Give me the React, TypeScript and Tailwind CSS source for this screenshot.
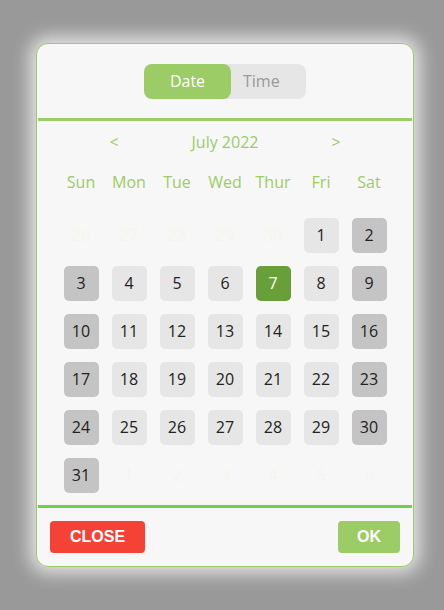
import React from "react";

const font = { fontFamily: '"Open Sans", "Noto Sans", sans-serif' };

const weekdays = ["Sun", "Mon", "Tue", "Wed", "Thur", "Fri", "Sat"];

type Cell = { n: number; muted?: boolean };

function buildDays(): Cell[] {
  const cells: Cell[] = [];
  for (let d = 26; d <= 30; d++) cells.push({ n: d, muted: true });
  for (let d = 1; d <= 31; d++) cells.push({ n: d });
  for (let d = 1; d <= 6; d++) cells.push({ n: d, muted: true });
  return cells;
}

export default function App() {
  const days = buildDays();
  const selected = 7;

  return (
    <div className="w-[444px] h-[610px] bg-[#999999] flex items-center pl-[36px]" style={font}>
      <div className="w-[378px] h-[524px] bg-[#f7f7f7] border border-[#9ccc65] rounded-[12px] shadow-[0_0_18px_6px_rgba(255,255,255,0.75)] flex flex-col overflow-hidden">
        {/* tabs */}
        <div className="h-[74px] flex items-center justify-center">
          <div className="w-[162px] h-[35px] bg-[#e6e6e6] rounded-[8px] flex">
            <div className="w-[87px] h-full bg-[#9ccc65] rounded-[8px] flex items-center justify-center text-white text-[16px]">
              Date
            </div>
            <div className="flex-1 flex items-center pl-[12px] text-[#999] text-[16px]">
              Time
            </div>
          </div>
        </div>
        <div className="h-[3px] bg-[#9ccc65] mx-px" />

        {/* calendar */}
        <div className="flex flex-col items-center">
          <div className="h-[41px] w-[336px] flex items-center text-[#9ccc65] text-[16px]">
            <div className="w-[48px] ml-[33px] text-center">&lt;</div>
            <div className="flex-1 text-center">July 2022</div>
            <div className="w-[48px] mr-[33px] text-center">&gt;</div>
          </div>
          <div className="h-[40px] w-[336px] grid grid-cols-7 items-center text-[#9ccc65] text-[16px]">
            {weekdays.map((w) => (
              <div key={w} className="text-center">{w}</div>
            ))}
          </div>
          <div className="mt-[9px] w-[336px] grid grid-cols-7 auto-rows-[48px]">
            {days.map((c, i) => {
              const col = i % 7;
              const weekend = col === 0 || col === 6;
              if (c.muted) {
                return (
                  <div key={i} className="flex items-center justify-center text-[16px] text-[#f1f7ec]">
                    {c.n}
                  </div>
                );
              }
              const isSel = c.n === selected;
              const bg = isSel ? "bg-[#689f38] text-white" : weekend ? "bg-[#c4c4c4] text-[#222]" : "bg-[#e6e6e6] text-[#222]";
              return (
                <div key={i} className="flex items-center justify-center">
                  <div className={`w-[35px] h-[35px] rounded-[5px] flex items-center justify-center text-[16px] ${bg}`}>
                    {c.n}
                  </div>
                </div>
              );
            })}
          </div>
        </div>

        <div className="mt-auto h-[3px] bg-[#6fcf50] mx-px" />
        {/* footer */}
        <div className="h-[58px] flex items-center justify-between px-[13px]" style={{ fontFamily: '"Liberation Sans", Arial, sans-serif' }}>
          <button className="w-[95px] h-[32px] rounded-[4px] bg-[#f44336] text-white font-bold text-[16px]">CLOSE</button>
          <button className="w-[62px] h-[32px] rounded-[4px] bg-[#9ccc65] text-white font-bold text-[16px]">OK</button>
        </div>
      </div>
    </div>
  );
}
